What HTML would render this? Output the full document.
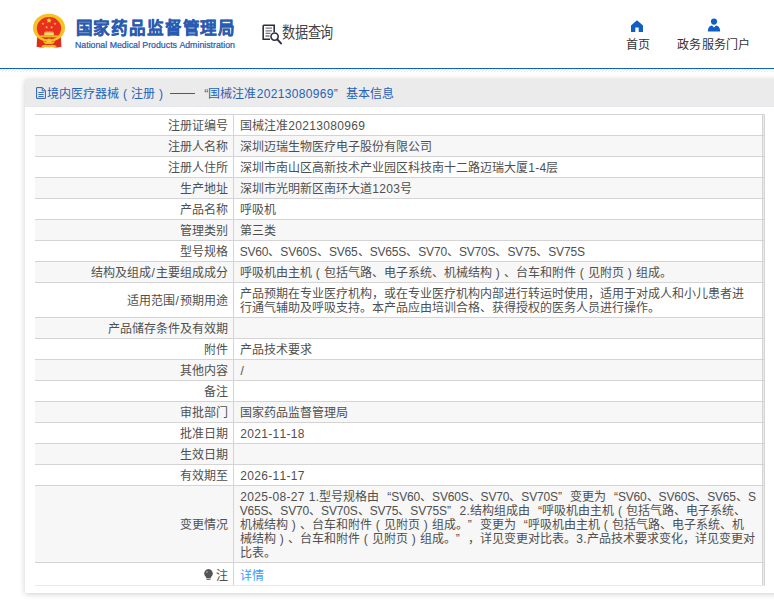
<!DOCTYPE html>
<html lang="zh-CN">
<head>
<meta charset="utf-8">
<title>国家药品监督管理局</title>
<style>
*{box-sizing:border-box;}
html,body{margin:0;padding:0;}
body{width:774px;height:600px;overflow:hidden;background:#fff;position:relative;
 font-family:"Liberation Sans",sans-serif;font-size:12px;color:#444;text-spacing-trim:space-all;font-kerning:none;}
#hdr{position:absolute;left:0;top:0;width:774px;height:68px;background:#fff;}
#line{position:absolute;left:0;top:68px;width:774px;height:1px;background:#0f63c1;}
#hatch{position:absolute;left:0;top:69px;width:774px;height:3px;
 background:repeating-linear-gradient(135deg,#fff 0,#fff 1.2px,#e6e6e6 1.2px,#e6e6e6 2.12px);}
#emblem{position:absolute;left:30px;top:10px;width:38px;height:40px;}
#logo{position:absolute;left:70px;top:10px;width:180px;height:45px;}
#sicon{position:absolute;left:261.7px;top:23.5px;width:22px;height:22px;}
#stext{position:absolute;left:281.5px;top:23.2px;font-size:15.4px;line-height:20px;color:#444;white-space:nowrap;transform:scaleX(.855);transform-origin:0 0;}
.nav{position:absolute;top:37.3px;letter-spacing:.1px;font-size:12px;line-height:16px;color:#333;white-space:nowrap;text-align:center;}
.nicon{position:absolute;}
#panel{position:absolute;left:25px;top:79px;width:800px;height:514px;background:#fff;box-shadow:0 1px 6px rgba(0,0,0,.2);}
#ptitle{position:absolute;left:0;top:0;width:100%;height:28px;background:#ebebeb;border-bottom:1px solid #e6e9f3;}
#ptitle span{position:absolute;left:22px;top:6.7px;line-height:16px;font-size:12px;color:#2661b8;white-space:nowrap;}
#picon{position:absolute;left:11px;top:8px;width:10px;height:12px;}
table{position:absolute;left:10px;top:35px;width:730px;border-collapse:collapse;table-layout:fixed;}
td{border:1px solid #d4d4d4;padding:4px 6px 2px 6px;line-height:14px;font-size:12px;color:#4f4f4f;vertical-align:middle;overflow:hidden;white-space:nowrap;}
td.l{text-align:right;width:198px;padding:4px 5px 2px 6px;border-left:none;}
td.v{text-align:left;width:529px;}
td.x{width:2px;padding:0;background:#e8ebf3;}
tr:nth-child(even) td{background:#f7f7f7;}
tr:nth-child(even) td.x{background:#e8ebf3;}
tr.last td{height:23px;border-bottom-color:#e6e9f3;padding-top:5.3px;padding-bottom:.7px;}
a{color:#3c9bff;text-decoration:none;}
i{font-style:normal;display:inline-block;width:12px;}
i.p{text-align:center;}
i.q1{text-align:right;}
i.q2{text-align:left;}
i.sp{width:3.3px;}
i.sp2{width:1.3px;}
i.dash{width:24.6px;height:1px;background:#2661b8;vertical-align:4px;}
b{font-weight:normal;}
b.d{letter-spacing:.33px;margin-left:.5px;}
b.m{letter-spacing:-.16px;}
b.s{padding:0 .8px;}
.bulb{width:9px;height:11px;vertical-align:.2px;margin-right:2.4px;margin-left:-1px;}
</style>
</head>
<body>
<div id="hdr">
 <svg id="emblem" viewBox="0 0 38 40">
  <path d="M7.2 26 L6.6 36.8 Q10.5 38.2 13.5 37.2 L19 35 L24.5 37.2 Q27.5 38.2 31.4 36.8 L30.8 26 Z" fill="#e02c1d"/>
  <ellipse cx="19" cy="17.8" rx="16" ry="14.1" fill="#f5c222"/>
  <ellipse cx="19" cy="18.3" rx="12.2" ry="11.2" fill="#e9301f"/>
  <polygon points="19.00,7.60 19.74,9.58 21.85,9.67 20.20,10.99 20.76,13.03 19.00,11.86 17.24,13.03 17.80,10.99 16.15,9.67 18.26,9.58" fill="#f9d23c"/><polygon points="13.00,12.20 13.37,13.19 14.43,13.24 13.60,13.89 13.88,14.91 13.00,14.33 12.12,14.91 12.40,13.89 11.57,13.24 12.63,13.19" fill="#f9d23c"/><polygon points="25.00,12.20 25.37,13.19 26.43,13.24 25.60,13.89 25.88,14.91 25.00,14.33 24.12,14.91 24.40,13.89 23.57,13.24 24.63,13.19" fill="#f9d23c"/><polygon points="16.60,15.80 16.97,16.79 18.03,16.84 17.20,17.49 17.48,18.51 16.60,17.93 15.72,18.51 16.00,17.49 15.17,16.84 16.23,16.79" fill="#f9d23c"/><polygon points="21.60,15.80 21.97,16.79 23.03,16.84 22.20,17.49 22.48,18.51 21.60,17.93 20.72,18.51 21.00,17.49 20.17,16.84 21.23,16.79" fill="#f9d23c"/>
  <rect x="15.3" y="21.6" width="7.4" height="1" fill="#f6cf55"/>
  <rect x="14.2" y="22.5" width="9.6" height="2.9" fill="#f8d76c"/>
  <rect x="10.2" y="25.3" width="17.6" height="2" fill="#f3b52c"/>
    <circle cx="19" cy="31.2" r="2.7" fill="#f7c92c"/><path d="M13 30.5 Q16 33.5 19 31.5 Q22 33.5 25 30.5 L24 33 Q21 35 19 33.4 Q17 35 14 33 Z" fill="#f5c222"/>
  <path d="M11.5 36 Q15 33.8 19 35.2 Q23 33.8 26.5 36 L25.6 38.3 Q22 36.4 19 37.6 Q16 36.4 12.4 38.3 Z" fill="#f3bb28"/>
 </svg>
 <svg id="logo" viewBox="0 0 180 45">
  <text x="5.6" y="24" font-family="Liberation Sans, sans-serif" font-size="16.6" font-weight="bold" fill="#2a5bb0" stroke="#2a5bb0" stroke-width="0.3" textLength="159.6" lengthAdjust="spacing">国家药品监督管理局</text>
  <text x="5" y="37.7" font-family="Liberation Sans, sans-serif" font-size="8.6" fill="#2a5bb0" stroke="#2a5bb0" stroke-width="0.22" textLength="160" lengthAdjust="spacingAndGlyphs">National Medical Products Administration</text>
 </svg>
 <svg id="sicon" viewBox="0 0 22 22">
  <path d="M1.2 1.2 H12.2 V8 M1.2 1.2 V15.2 H8" fill="none" stroke="#2d2d46" stroke-width="1.6"/>
  <path d="M3.5 4.2H10M3.5 6.8H10M3.5 9.4H8.5M3.5 12H7.5" stroke="#777" stroke-width="1.3"/>
  <circle cx="12.6" cy="12.6" r="3.6" fill="#fff" stroke="#2d2d46" stroke-width="1.6"/>
  <path d="M15.3 15.4 L19 19.4" stroke="#2d2d46" stroke-width="2" stroke-linecap="round"/>
 </svg>
 <div id="stext">数据查询</div>
 <svg class="nicon" style="left:630px;top:19.5px;width:14px;height:12px" viewBox="0 0 14 12">
  <path d="M7 0.3 L13 5.6 V12 H8.7 V7.6 H5.3 V12 H1 V5.6 Z" fill="#0f5fc4"/>
 </svg>
 <svg class="nicon" style="left:707px;top:18.4px;width:14px;height:14px" viewBox="0 0 14 14">
  <circle cx="7" cy="3.6" r="3.1" fill="#0f5fc4"/>
  <path d="M0.8 13.4 Q1 8 5 7.6 L7 9.6 L9 7.6 Q13 8 13.2 13.4 Z" fill="#0f5fc4"/>
 </svg>
 <div class="nav" style="left:618px;width:40px;">首页</div>
 <div class="nav" style="left:673.7px;width:80px;">政务服务门户</div>
</div>
<div id="line"></div>
<div id="hatch"></div>
<div id="panel">
 <div id="ptitle">
  <svg id="picon" viewBox="0 0 10 12"><path d="M0.6 0.6 H6.4 L9.4 3.6 V11.4 H0.6 Z M6.2 0.8 V3.8 H9.2" fill="none" stroke="#2661b8" stroke-width="1"/><path d="M2.4 5.5H7.6M2.4 7.5H7.6M2.4 9.5H7.6" stroke="#2661b8" stroke-width="0.9"/></svg>
  <span>境内医疗器械<i class="p">(</i>注册<i class="p">)</i><i class="sp"></i><i class="dash"></i><i class="sp2"></i><i class="q1">“</i>国械注准<b class="d">20213080969</b><i class="q2">”</i>基本信息</span>
 </div>
 <table>
 <tr><td class="l">注册证编号</td><td class="v">国械注准<b class="d">20213080969</b></td><td class="x"></td></tr>
 <tr><td class="l">注册人名称</td><td class="v">深圳迈瑞生物医疗电子股份有限公司</td><td class="x"></td></tr>
 <tr><td class="l">注册人住所</td><td class="v">深圳市南山区高新技术产业园区科技南十二路迈瑞大厦<b class="d">1-4</b>层</td><td class="x"></td></tr>
 <tr><td class="l">生产地址</td><td class="v">深圳市光明新区南环大道<b class="d">1203</b>号</td><td class="x"></td></tr>
 <tr><td class="l">产品名称</td><td class="v">呼吸机</td><td class="x"></td></tr>
 <tr><td class="l">管理类别</td><td class="v">第三类</td><td class="x"></td></tr>
 <tr><td class="l">型号规格</td><td class="v"><b class="m">SV60</b>、<b class="m">SV60S</b>、<b class="m">SV65</b>、<b class="m">SV65S</b>、<b class="m">SV70</b>、<b class="m">SV70S</b>、<b class="m">SV75</b>、<b class="m">SV75S</b></td><td class="x"></td></tr>
 <tr><td class="l">结构及组成<b class="s">/</b>主要组成成分</td><td class="v">呼吸机由主机<i class="p">(</i>包括气路、电子系统、机械结构<i class="p">)</i>、台车和附件<i class="p">(</i>见附页<i class="p">)</i>组成。</td><td class="x"></td></tr>
 <tr><td class="l">适用范围<b class="s">/</b>预期用途</td><td class="v">产品预期在专业医疗机构，或在专业医疗机构内部进行转运时使用，适用于对成人和小儿患者进<br>行通气辅助及呼吸支持。本产品应由培训合格、获得授权的医务人员进行操作。</td><td class="x"></td></tr>
 <tr><td class="l">产品储存条件及有效期</td><td class="v"></td><td class="x"></td></tr>
 <tr><td class="l">附件</td><td class="v">产品技术要求</td><td class="x"></td></tr>
 <tr><td class="l">其他内容</td><td class="v"><b class="s">/</b></td><td class="x"></td></tr>
 <tr><td class="l">备注</td><td class="v"></td><td class="x"></td></tr>
 <tr><td class="l">审批部门</td><td class="v">国家药品监督管理局</td><td class="x"></td></tr>
 <tr><td class="l">批准日期</td><td class="v"><b class="d">2021-11-18</b></td><td class="x"></td></tr>
 <tr><td class="l">生效日期</td><td class="v"></td><td class="x"></td></tr>
 <tr><td class="l">有效期至</td><td class="v"><b class="d">2026-11-17</b></td><td class="x"></td></tr>
 <tr><td class="l">变更情况</td><td class="v"><b class="d">2025-08-27</b> <b class="d">1.</b>型号规格由<i class="q1">“</i><b class="m">SV60</b>、<b class="m">SV60S</b>、<b class="m">SV70</b>、<b class="m">SV70S</b><i class="q2">”</i>变更为<i class="q1">“</i><b class="m">SV60</b>、<b class="m">SV60S</b>、<b class="m">SV65</b>、<b class="m">S</b><br><b class="m">V65S</b>、<b class="m">SV70</b>、<b class="m">SV70S</b>、<b class="m">SV75</b>、<b class="m">SV75S</b><i class="q2">”</i><b class="d">2.</b>结构组成由<i class="q1">“</i>呼吸机由主机<i class="p">(</i>包括气路、电子系统、<br>机械结构<i class="p">)</i>、台车和附件<i class="p">(</i>见附页<i class="p">)</i>组成。<i class="q2">”</i>变更为<i class="q1">“</i>呼吸机由主机<i class="p">(</i>包括气路、电子系统、机<br>械结构<i class="p">)</i>、台车和附件<i class="p">(</i>见附页<i class="p">)</i>组成。<i class="q2">”</i>，详见变更对比表。<b class="d">3.</b>产品技术要求变化，详见变更对<br>比表。</td><td class="x"></td></tr>
 <tr class="last"><td class="l"><svg class="bulb" viewBox="0 0 9 11"><path d="M4.5 0 A4.4 4.4 0 0 1 7.3 7.7 L6.8 9 H2.2 L1.7 7.7 A4.4 4.4 0 0 1 4.5 0Z" fill="#555"/><rect x="2.4" y="9.6" width="4.2" height="1.2" fill="#555"/><circle cx="3" cy="3" r="0.9" fill="#999"/></svg>注</td><td class="v"><a>详情</a></td><td class="x"></td></tr>
 </table>
</div>
</body>
</html>
